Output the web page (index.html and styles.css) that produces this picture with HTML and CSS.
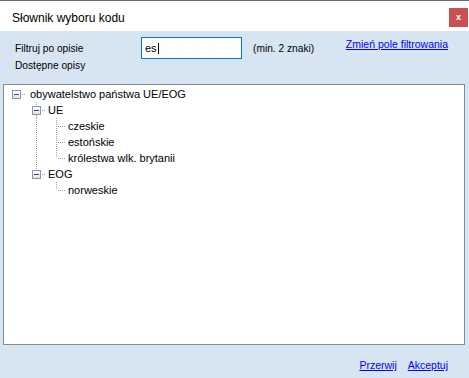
FILE: index.html
```html
<!DOCTYPE html>
<html lang="pl">
<head>
    <meta charset="UTF-8">
    <title>Słownik wyboru kodu</title>
    <link rel="stylesheet" href="styles.css">
</head>
<body>
    <div class="window">
        <div class="titlebar">
            <span class="title">Słownik wyboru kodu</span>
            <span class="close">x</span>
        </div>

        <div class="content">
            <div class="filter-row">
                <span class="label filter-label">Filtruj po opisie</span>
                <div class="field">es<span class="caret"></span></div>
                <span class="label hint">(min. 2 znaki)</span>
                <a class="link change" href="#">Zmień pole filtrowania</a>
            </div>
            <div class="label available">Dostępne opisy</div>

            <div class="tree">
                <div class="row">
                    <span class="c exp-cell"><span class="exp"></span></span>
                    <span class="text root">obywatelstwo państwa UE/EOG</span>
                </div>
                <div class="row">
                    <span class="c"></span>
                    <span class="c exp-cell up down"><span class="exp"></span></span>
                    <span class="text">UE</span>
                </div>
                <div class="row">
                    <span class="c"></span>
                    <span class="c v"></span>
                    <span class="c t"></span>
                    <span class="text">czeskie</span>
                </div>
                <div class="row">
                    <span class="c"></span>
                    <span class="c v"></span>
                    <span class="c t"></span>
                    <span class="text">estońskie</span>
                </div>
                <div class="row">
                    <span class="c"></span>
                    <span class="c v"></span>
                    <span class="c l"></span>
                    <span class="text">królestwa wlk. brytanii</span>
                </div>
                <div class="row">
                    <span class="c"></span>
                    <span class="c exp-cell up"><span class="exp"></span></span>
                    <span class="text">EOG</span>
                </div>
                <div class="row">
                    <span class="c"></span>
                    <span class="c"></span>
                    <span class="c l"></span>
                    <span class="text">norweskie</span>
                </div>
            </div>

            <div class="footer">
                <a class="link" href="#">Przerwij</a>
                <a class="link" href="#">Akceptuj</a>
            </div>
        </div>
    </div>
</body>
</html>
```

FILE: styles.css
```css
body {
    margin: 0;
    font-family: 'Liberation Sans', Arial, sans-serif;
    color: #000;
}

.window {
    width: 469px;
    height: 378px;
    border-top: 1px solid #6e6e6e;
    box-sizing: border-box;
    display: flex;
    flex-direction: column;
    background: #d7e4f2;
}

.titlebar {
    height: 30px;
    background: #fff;
    display: flex;
    align-items: flex-start;
    justify-content: space-between;
    flex: none;
}

.title {
    font-size: 12px;
    line-height: 14px;
    margin: 10px 0 0 12px;
}

.close {
    width: 19px;
    height: 19px;
    margin: 7px 1px 0 0;
    background: #c75050;
    color: #fff;
    font-weight: bold;
    font-size: 9px;
    line-height: 18px;
    text-align: center;
}

.content {
    flex: 1;
    display: flex;
    flex-direction: column;
    padding: 6px 4px 0 3px;
}

.label {
    font-size: 10.2px;
    line-height: 13px;
}

.filter-row {
    display: flex;
    align-items: center;
    height: 22px;
}

.filter-label {
    width: 126px;
    padding-left: 12px;
    flex: none;
}

.field {
    width: 101px;
    height: 22px;
    box-sizing: border-box;
    border: 1px solid #0078d7;
    background: #fff;
    font-size: 11px;
    line-height: 18px;
    padding-left: 3px;
    display: flex;
    align-items: center;
}

.caret {
    width: 1px;
    height: 11px;
    background: #000;
    margin-left: 1px;
}

.hint {
    margin-left: 11px;
}

.link {
    color: #0000ff;
    font-size: 10.5px;
    line-height: 13px;
    text-decoration: underline;
}

.change {
    margin-left: auto;
    margin-right: 17px;
    align-self: flex-start;
    margin-top: 1px;
}

.available {
    padding-left: 12px;
}

.tree {
    margin-top: 12px;
    height: 261px;
    box-sizing: border-box;
    border: 1px solid #868a92;
    background: #fff;
    padding: 1px 0 0 2px;
}

.row {
    display: flex;
    height: 16px;
    font-size: 11px;
    line-height: 16px;
    white-space: nowrap;
}

.c {
    width: 20px;
    height: 16px;
    flex: none;
    background-repeat: no-repeat;
}

/* vertical dotted line through the whole row */
.c.v {
    background-image: repeating-linear-gradient(to bottom, #a0a0a0 0 1px, transparent 1px 2px);
    background-position: 10px 0;
    background-size: 1px 16px;
}

/* tee: vertical + horizontal */
.c.t {
    background-image:
        repeating-linear-gradient(to bottom, #a0a0a0 0 1px, transparent 1px 2px),
        repeating-linear-gradient(to right, #a0a0a0 0 1px, transparent 1px 2px);
    background-position: 10px 0, 12px 8px;
    background-size: 1px 16px, 9px 1px;
}

/* elbow: top half + horizontal */
.c.l {
    background-image:
        repeating-linear-gradient(to bottom, #a0a0a0 0 1px, transparent 1px 2px),
        repeating-linear-gradient(to right, #a0a0a0 0 1px, transparent 1px 2px);
    background-position: 10px 0, 12px 8px;
    background-size: 1px 8px, 9px 1px;
}

.exp-cell {
    background-image: repeating-linear-gradient(to right, #a0a0a0 0 1px, transparent 1px 2px);
    background-position: 16px 8px;
    background-size: 5px 1px;
}

.exp-cell.up {
    background-image:
        repeating-linear-gradient(to right, #a0a0a0 0 1px, transparent 1px 2px),
        repeating-linear-gradient(to bottom, #a0a0a0 0 1px, transparent 1px 2px);
    background-position: 16px 8px, 10px 0;
    background-size: 5px 1px, 1px 4px;
}

.exp-cell.up.down {
    background-image:
        repeating-linear-gradient(to right, #a0a0a0 0 1px, transparent 1px 2px),
        repeating-linear-gradient(to bottom, #a0a0a0 0 1px, transparent 1px 2px),
        repeating-linear-gradient(to bottom, #a0a0a0 0 1px, transparent 1px 2px);
    background-position: 16px 8px, 10px 0, 10px 13px;
    background-size: 5px 1px, 1px 4px, 1px 3px;
}

.exp {
    display: flex;
    align-items: center;
    justify-content: center;
    width: 9px;
    height: 9px;
    box-sizing: border-box;
    margin: 4px 0 0 6px;
    border: 1px solid #8e959e;
    background: linear-gradient(#ffffff, #dfe3ea);
}

.exp::before {
    content: "";
    width: 5px;
    height: 1px;
    background: #2b4f93;
}

.text {
    margin-left: 2px;
}

.text.root {
    margin-left: 4px;
}

.footer {
    display: flex;
    justify-content: flex-end;
    gap: 11px;
    padding: 14px 17px 0 0;
}
```
